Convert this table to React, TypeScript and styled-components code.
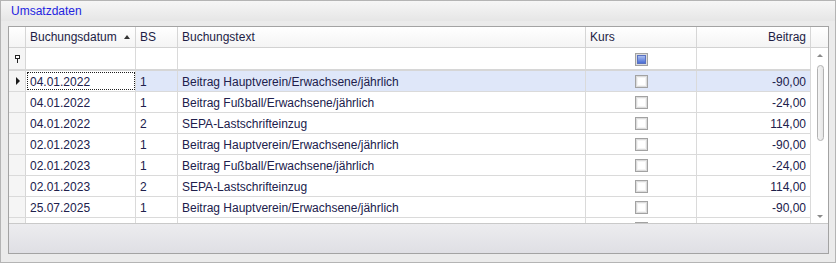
import React from 'react';
import styled, { createGlobalStyle } from 'styled-components';

type Buchung = {
    datum: string,
    bs: string,
    text: string,
    kurs: boolean,
    beitrag: string
}

const buchungen: Buchung[] = [
    { datum: '04.01.2022', bs: '1', text: 'Beitrag Hauptverein/Erwachsene/jährlich', kurs: false, beitrag: '-90,00' },
    { datum: '04.01.2022', bs: '1', text: 'Beitrag Fußball/Erwachsene/jährlich', kurs: false, beitrag: '-24,00' },
    { datum: '04.01.2022', bs: '2', text: 'SEPA-Lastschrifteinzug', kurs: false, beitrag: '114,00' },
    { datum: '02.01.2023', bs: '1', text: 'Beitrag Hauptverein/Erwachsene/jährlich', kurs: false, beitrag: '-90,00' },
    { datum: '02.01.2023', bs: '1', text: 'Beitrag Fußball/Erwachsene/jährlich', kurs: false, beitrag: '-24,00' },
    { datum: '02.01.2023', bs: '2', text: 'SEPA-Lastschrifteinzug', kurs: false, beitrag: '114,00' },
    { datum: '25.07.2025', bs: '1', text: 'Beitrag Hauptverein/Erwachsene/jährlich', kurs: false, beitrag: '-90,00' },
    { datum: '25.07.2025', bs: '1', text: 'Beitrag Fußball/Erwachsene/jährlich', kurs: false, beitrag: '-24,00' },
];

const columns = '17px 110px 42px 408px 111px 114px';

const GlobalStyle = createGlobalStyle`
    html, body {
        margin: 0;
        padding: 0;
        background: #ffffff;
    }
    * {
        box-sizing: border-box;
    }
`;

const Panel = styled.div`
    width: 836px;
    height: 263px;
    border: 1px solid #b4b4b4;
    background: #ebebeb;
    display: flex;
    flex-direction: column;
    overflow: hidden;
    font-family: "Liberation Sans", Arial, sans-serif;
    font-size: 12px;
`;

const PanelTitle = styled.div`
    flex: 0 0 20px;
    padding-left: 10px;
    display: flex;
    align-items: center;
    color: #2424e0;
    background: linear-gradient(#f6f6f6, #e6e6e6);
`;

const PanelBody = styled.div`
    flex: 1;
    min-height: 0;
    padding: 5px 6px 8px 7px;
    display: flex;
`;

const GridBox = styled.div`
    flex: 1;
    min-height: 0;
    border: 1px solid #a3a3a3;
    background: #ffffff;
    display: flex;
    flex-direction: column;
`;

const HeaderRow = styled.div`
    flex: 0 0 21px;
    display: grid;
    grid-template-columns: ${columns} 17px;
    border-bottom: 1px solid #d2d2d2;
    background: linear-gradient(#ffffff, #f4f4f4);
`;

const HeaderCell = styled.div<{ $right?: boolean, $last?: boolean }>`
    display: flex;
    align-items: center;
    justify-content: ${p => p.$right ? 'flex-end' : 'flex-start'};
    padding: 0 ${p => p.$right ? '4px' : '0'} 0 4px;
    border-right: ${p => p.$last ? 'none' : '1px solid #d6d6d6'};
    color: #1d1d45;
    white-space: nowrap;
`;

const SortArrow = styled.span`
    margin-left: 7px;
    width: 0;
    height: 0;
    border-left: 3.5px solid transparent;
    border-right: 3.5px solid transparent;
    border-bottom: 4px solid #333333;
`;

const GridMain = styled.div`
    flex: 1;
    display: flex;
    min-height: 0;
`;

const RowsArea = styled.div`
    flex: 1;
    display: flex;
    flex-direction: column;
    min-height: 0;
`;

const FilterRow = styled.div`
    flex: 0 0 23px;
    display: grid;
    grid-template-columns: ${columns};
    border-bottom: 2px solid #d6d6d6;
`;

const DataRows = styled.div`
    flex: 1;
    min-height: 0;
    overflow: hidden;
`;

const Row = styled.div<{ $selected?: boolean }>`
    display: grid;
    grid-template-columns: ${columns};
    height: 21px;
    border-bottom: 1px solid #dadada;
    background: ${p => p.$selected ? '#dfe7f9' : '#ffffff'};
`;

const Cell = styled.div<{ $right?: boolean, $center?: boolean, $focused?: boolean }>`
    display: flex;
    align-items: center;
    justify-content: ${p => p.$right ? 'flex-end' : p.$center ? 'center' : 'flex-start'};
    padding: 1px ${p => p.$right ? '4px' : '0'} 0 ${p => p.$center ? '0' : '4px'};
    border-right: 1px solid #dadada;
    color: #20204c;
    white-space: nowrap;
    overflow: hidden;
    ${p => p.$focused && `
        background: #ffffff;
        outline: 1px dotted #202020;
        outline-offset: -2px;
    `}
`;

const IndicatorCell = styled.div`
    display: flex;
    align-items: center;
    justify-content: center;
    border-right: 1px solid #d6d6d6;
    background: #f5f5f5;
`;

const RowArrow = styled.span`
    width: 0;
    height: 0;
    border-top: 4px solid transparent;
    border-bottom: 4px solid transparent;
    border-left: 4px solid #1a1a1a;
    margin-left: 1px;
`;

const CheckBox = styled.span<{ $filled?: boolean }>`
    width: 13px;
    height: 13px;
    border: 1px solid #a2a2a2;
    background: #dcdcdc;
    padding: 1px;
    display: flex;
    &::after {
        content: '';
        flex: 1;
        background: ${p => p.$filled ? 'linear-gradient(#a9bdf0, #4b6fd6)' : '#ffffff'};
        border: ${p => p.$filled ? '1px solid #5a72c0' : '1px solid #f4f4f4'};
    }
`;

const ScrollBar = styled.div`
    width: 17px;
    display: flex;
    flex-direction: column;
    align-items: center;
    background: #ffffff;
    padding: 6px 0 5px 1px;
`;

const ScrollArrow = styled.span<{ $down?: boolean }>`
    width: 0;
    height: 0;
    border-left: 3px solid transparent;
    border-right: 3px solid transparent;
    ${p => p.$down ? 'border-top: 3px solid #8a8a8a;' : 'border-bottom: 3px solid #8a8a8a;'}
`;

const ScrollTrack = styled.div`
    flex: 1;
    width: 100%;
    display: flex;
    justify-content: center;
    padding-top: 8px;
`;

const ScrollThumb = styled.div`
    width: 7px;
    height: 76px;
    border: 1px solid #b2b2b2;
    border-radius: 4px;
    background: linear-gradient(90deg, #f4f4f4, #e6e6e6);
`;

const GridFooter = styled.div`
    flex: 0 0 30px;
    border-top: 1px solid #c9c9c9;
    background: linear-gradient(#ececef, #dfdfe4);
`;

const FilterIcon = () => (
    <svg width="5" height="8" viewBox="0 0 5 8">
        <path d="M0 0h5v4h-5z" fill="#222" />
        <path d="M1 1h3v2h-3z" fill="#fff" />
        <path d="M2 4h1v4h-1z" fill="#222" />
    </svg>
);

const App = () => {
    const rows = buchungen.map((b, i) => (
        <Row key={i} $selected={i === 0}>
            <IndicatorCell>{i === 0 && <RowArrow />}</IndicatorCell>
            <Cell $focused={i === 0}>{b.datum}</Cell>
            <Cell>{b.bs}</Cell>
            <Cell>{b.text}</Cell>
            <Cell $center><CheckBox /></Cell>
            <Cell $right>{b.beitrag}</Cell>
        </Row>
    ));

    return <>
        <GlobalStyle />
        <Panel>
            <PanelTitle>Umsatzdaten</PanelTitle>
            <PanelBody>
                <GridBox>
                    <HeaderRow>
                        <HeaderCell />
                        <HeaderCell>Buchungsdatum<SortArrow /></HeaderCell>
                        <HeaderCell>BS</HeaderCell>
                        <HeaderCell>Buchungstext</HeaderCell>
                        <HeaderCell>Kurs</HeaderCell>
                        <HeaderCell $right>Beitrag</HeaderCell>
                        <HeaderCell $last />
                    </HeaderRow>
                    <GridMain>
                        <RowsArea>
                            <FilterRow>
                                <IndicatorCell><FilterIcon /></IndicatorCell>
                                <Cell />
                                <Cell />
                                <Cell />
                                <Cell $center><CheckBox $filled /></Cell>
                                <Cell />
                            </FilterRow>
                            <DataRows>{rows}</DataRows>
                        </RowsArea>
                        <ScrollBar>
                            <ScrollArrow />
                            <ScrollTrack><ScrollThumb /></ScrollTrack>
                            <ScrollArrow $down />
                        </ScrollBar>
                    </GridMain>
                    <GridFooter />
                </GridBox>
            </PanelBody>
        </Panel>
    </>;
};

export default App;
